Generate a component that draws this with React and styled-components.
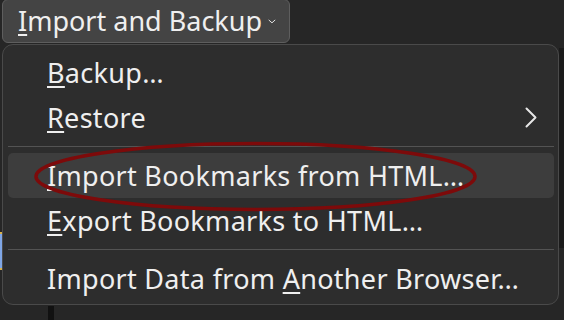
import React from "react";
import styled, { createGlobalStyle } from "styled-components";

const Global = createGlobalStyle`
  html, body { margin: 0; padding: 0; background: #262626; }
  body { font-family: "Noto Sans", "DejaVu Sans", sans-serif; color: #efefef; }
`;

const Page = styled.div`
  position: relative;
  width: 564px;
  height: 320px;
  overflow: hidden;
  background: #262626;
  display: flex;
  flex-direction: column;
  align-items: flex-start;
  padding-left: 2px;
  box-sizing: border-box;
`;

const MenuButton = styled.button`
  display: flex;
  align-items: center;
  gap: 6px;
  height: 44px;
  margin-top: -1px;
  padding: 0 13px 0 15px;
  width: 288px;
  box-sizing: border-box;
  background: #444444;
  border: 1px solid #5e5e5e;
  border-radius: 6px;
  color: #efefef;
  font-family: "Noto Sans", sans-serif;
  font-size: 27px;
  line-height: 42px;
  white-space: nowrap;
  cursor: default;
`;

const Mnemonic = styled.u`
  text-decoration: underline;
  text-decoration-thickness: 2px;
  text-underline-offset: 3px;
`;

const Menu = styled.div`
  margin-top: 1px;
  width: 557px;
  box-sizing: border-box;
  background: #2d2d2d;
  border: 1px solid #4a4a4a;
  border-radius: 11px;
  padding: 5px 4px 3px 5px;
  display: flex;
  flex-direction: column;
`;

const Item = styled.div`
  display: flex;
  align-items: center;
  justify-content: space-between;
  height: 45px;
  padding: 0 17px 0 39px;
  border-radius: 5px;
  background: ${(p) => (p.$active ? "#3d3d3d" : "transparent")};
  font-size: 27px;
  letter-spacing: 0.3px;
  line-height: 45px;
  color: #efefef;
  white-space: nowrap;
`;

const Separator = styled.div`
  height: 1px;
  background: #535353;
  margin: 6px 0 6px 0;
`;

const Ellipse = styled.svg`
  position: absolute;
  left: 0;
  top: 0;
  pointer-events: none;
`;

const Chevron = ({ w, h, d, sw }) => (
  <svg width={w} height={h} viewBox={`0 0 ${w} ${h}`} fill="none">
    <path d={d} stroke="#e6e6e6" strokeWidth={sw} strokeLinecap="round" strokeLinejoin="round" />
  </svg>
);

const RightStrip = styled.div`
  position: absolute;
  right: 0;
  top: 48px;
  width: 5px;
  height: 200px;
  background: #1b1b1b;
`;

const LeftMark = styled.div`
  position: absolute;
  left: 0;
  top: 232px;
  width: 2px;
  height: 34px;
  background: #7fa6e6;
  border-top: 2px solid #d8b04a;
  border-bottom: 2px solid #d8b04a;
`;

const BottomBar = styled.div`
  position: absolute;
  left: 48px;
  top: 306px;
  width: 6px;
  height: 14px;
  background: #111111;
`;

export default function App() {
  return (
    <>
      <Global />
      <Page>
        <RightStrip />
        <LeftMark />
        <BottomBar />
        <MenuButton>
          <span>
            <Mnemonic>I</Mnemonic>mport and Backup
          </span>
          <Chevron w={12} h={7} d="M1.5 1.5 L6 5.5 L10.5 1.5" sw={1.5} />
        </MenuButton>
        <Menu>
          <Item>
            <span>
              <Mnemonic>B</Mnemonic>ackup…
            </span>
          </Item>
          <Item>
            <span>
              <Mnemonic>R</Mnemonic>estore
            </span>
            <Chevron w={12} h={21} d="M1.5 1.5 L10.5 10.5 L1.5 19.5" sw={2} />
          </Item>
          <Separator />
          <Item $active>
            <span>
              <Mnemonic>I</Mnemonic>mport Bookmarks from HTML…
            </span>
          </Item>
          <Item>
            <span>
              <Mnemonic>E</Mnemonic>xport Bookmarks to HTML…
            </span>
          </Item>
          <Separator />
          <Item>
            <span>
              Import Data from <Mnemonic>A</Mnemonic>nother Browser…
            </span>
          </Item>
        </Menu>
        <Ellipse width="564" height="320">
          <ellipse cx="255.5" cy="176.5" rx="219.5" ry="33" fill="none" stroke="#7d0a0a" strokeWidth="3.5" />
        </Ellipse>
      </Page>
    </>
  );
}
